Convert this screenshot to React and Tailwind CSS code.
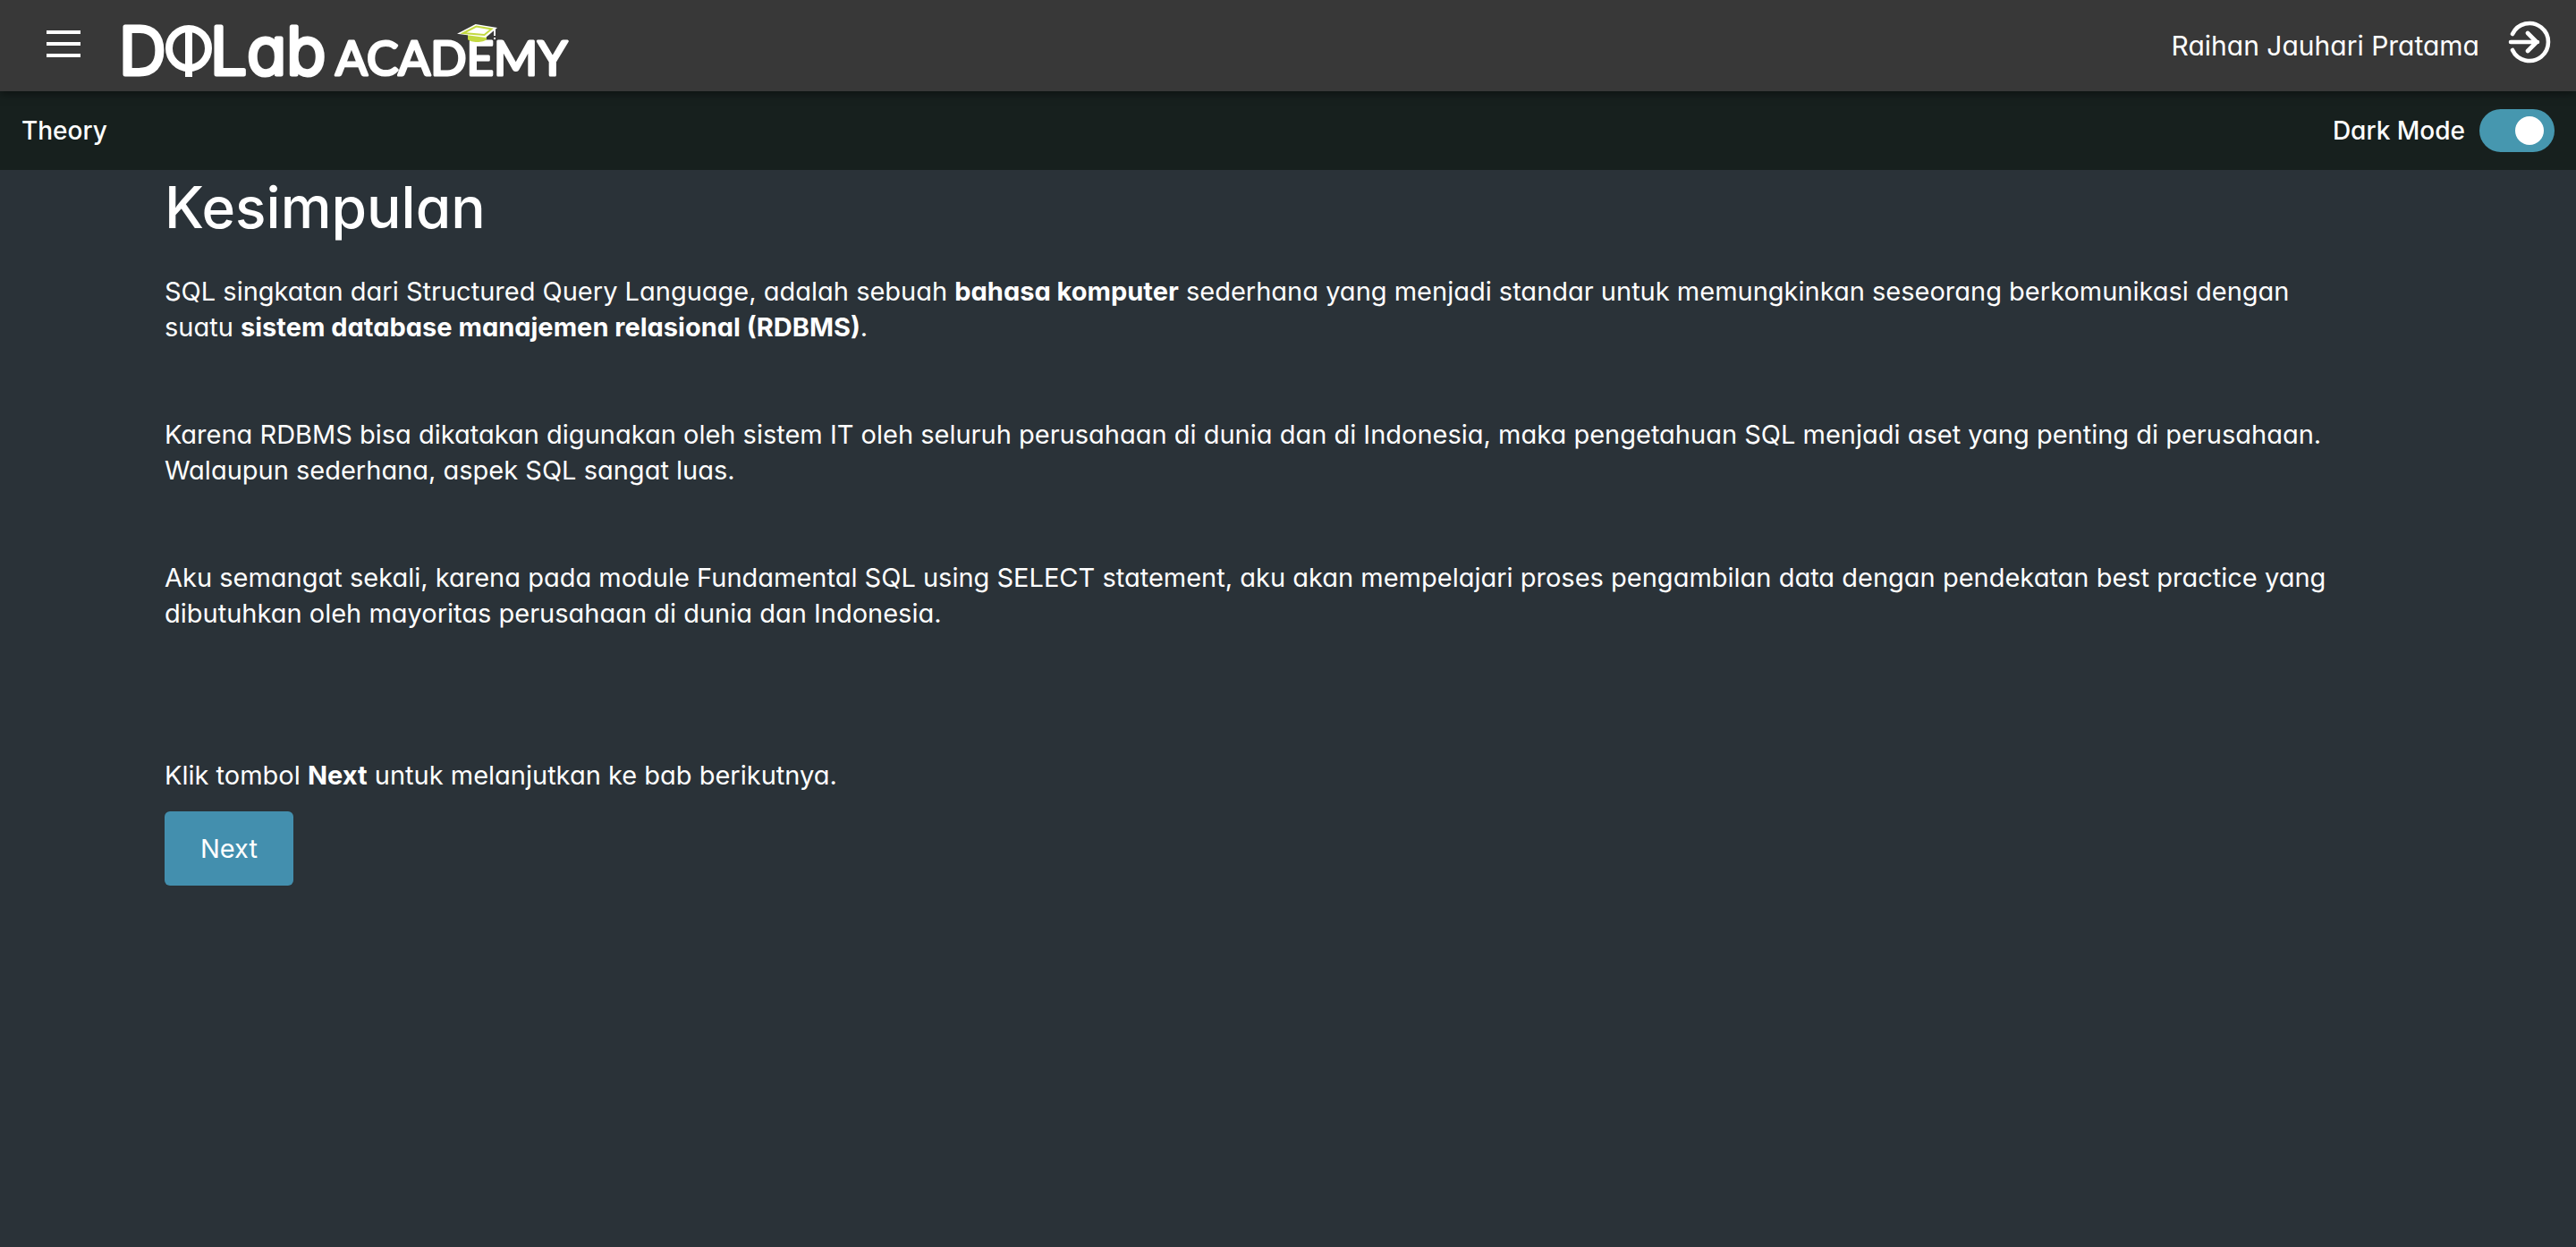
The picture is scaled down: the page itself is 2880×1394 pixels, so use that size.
import { useState } from "react";

function Logo() {
  return (
    <svg viewBox="0 0 506 64" className="h-16 w-[506px] overflow-visible" role="img" aria-label="DQLab Academy">
      <g fill="#fff" stroke="#fff" strokeLinejoin="round">
        <g className="font-['Inter'] font-light [font-feature-settings:'cv11']" strokeWidth="5">
          <text x="-5" y="58" fontSize="73">D</text>
          <text x="97" y="58" fontSize="73">Lab</text>
        </g>
        <text className="font-['Lato']" strokeWidth="3" x="237" y="59" fontSize="53">ACADEMY</text>
      </g>
      <circle cx="73" cy="29" r="22" fill="none" stroke="#fff" strokeWidth="8" />
      <path d="M73 5V61" stroke="#fff" strokeWidth="8" />
      <path d="M385 13v6c3 4 18 4 21 0v-6z" fill="#c3d940" />
      <path d="M373 12.7 393.700 2 418 6 405 17z" fill="#fff" />
      <path d="M380 12 394.5 4.6 411.5 7.4 403.500 14z" fill="#fff" stroke="#c3d940" strokeWidth="2" />
      <path d="M415 7v8M415 17v2" stroke="#fff" strokeWidth="2" />
    </svg>
  );
}

function ExitIcon() {
  return (
    <svg viewBox="0 0 48 48" className="size-12" fill="none" stroke="#fff" strokeWidth="4.6" strokeLinecap="round" strokeLinejoin="round" aria-hidden="true">
      <path d="M5 15A21 21 0 1 1 5 33M3 24h30M22 14l10 10-10 10" />
    </svg>
  );
}

function Header() {
  return (
    <header className="relative z-10 flex h-[102px] items-center justify-between bg-[#383838] pr-7 pl-[52px] shadow-[0_2px_10px_rgba(0,0,0,0.5)]">
      <div className="flex items-center gap-12">
        <button type="button" aria-label="Menu" className="flex w-[38px] flex-col gap-[9px] pb-1">
          <span className="h-1 bg-white" />
          <span className="h-1 bg-white" />
          <span className="h-1 bg-white" />
        </button>
        <a href="#" className="pt-3"><Logo /></a>
      </div>
      <div className="flex items-center gap-8">
        <span className="text-[30px]">Raihan Jauhari Pratama</span>
        <button type="button" aria-label="Log out" className="pb-2"><ExitIcon /></button>
      </div>
    </header>
  );
}

function SubBar() {
  const [dark, setDark] = useState(true);
  return (
    <div className="flex h-[88px] items-center justify-between bg-[#17201e] px-6 text-[28px] font-medium">
      <span>Theory</span>
      <label className="flex cursor-pointer items-center gap-4">
        Dark Mode
        <input
          type="checkbox"
          checked={dark}
          onChange={() => setDark(!dark)}
          className="flex h-12 w-[84px] appearance-none items-center rounded-full bg-gray-500 px-3 before:size-8 before:rounded-full before:bg-white checked:justify-end checked:bg-[#4697af]"
        />
      </label>
    </div>
  );
}

export default function App() {
  return (
    <div className="min-h-screen bg-[#2a3238] font-['Inter',sans-serif] text-[29px] leading-10 text-white [font-feature-settings:'cv11']">
      <Header />
      <SubBar />
      <main className="pt-1.5 pr-60 pl-[184px]">
        <h1 className="text-[64px] leading-[72px] font-medium">Kesimpulan</h1>
        <div className="mt-[38px] flex flex-col gap-20">
          <p>
            SQL singkatan dari Structured Query Language, adalah sebuah <b>bahasa komputer</b> sederhana yang menjadi standar untuk memungkinkan seseorang berkomunikasi dengan suatu <b>sistem database manajemen relasional (RDBMS)</b>.
          </p>
          <p>
            Karena RDBMS bisa dikatakan digunakan oleh sistem IT oleh seluruh perusahaan di dunia dan di Indonesia, maka pengetahuan SQL menjadi aset yang penting di perusahaan. Walaupun sederhana, aspek SQL sangat luas.
          </p>
          <p>
            Aku semangat sekali, karena pada module Fundamental SQL using SELECT statement, aku akan mempelajari proses pengambilan data dengan pendekatan best practice yang dibutuhkan oleh mayoritas perusahaan di dunia dan Indonesia.
          </p>
        </div>
        <p className="mt-[141px]">
          Klik tombol <b>Next</b> untuk melanjutkan ke bab berikutnya.
        </p>
        <button type="button" className="mt-5 h-[83px] rounded-md bg-[#438fae] px-10 text-[29px]">Next</button>
      </main>
    </div>
  );
}
